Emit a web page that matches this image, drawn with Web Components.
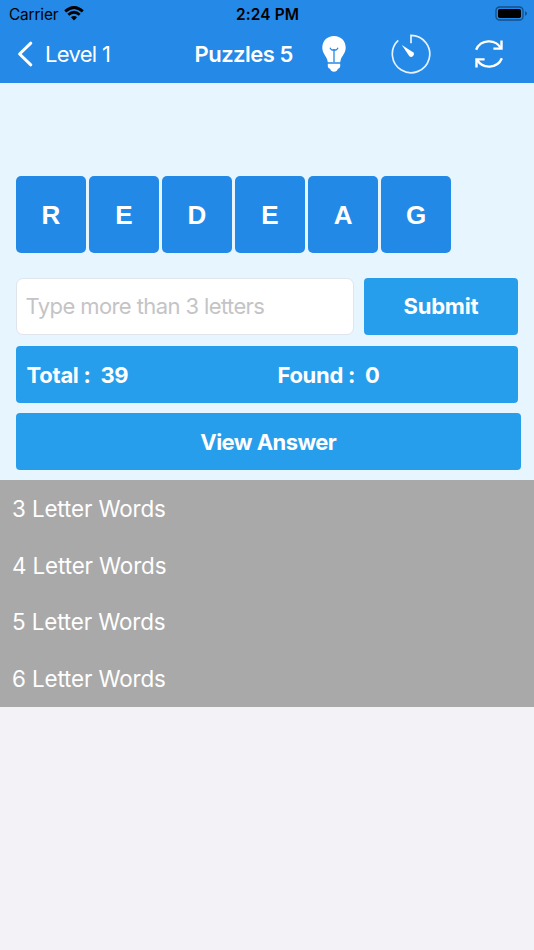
<!DOCTYPE html>
<html lang="en">
<head>
<meta charset="utf-8">
<title>Puzzles 5</title>
<style>
  body {
    margin: 0;
    background: #f2f2f7;
    font-family: Inter, "Liberation Sans", sans-serif;
    font-size: 22px;
  }
</style>
</head>
<body>
<puzzle-page letters="REDEAG" total="39" found="0"></puzzle-page>

<template id="status-bar">
  <style>
    :host {
      display: grid;
      grid-template-columns: 1fr auto 1fr;
      align-items: center;
      height: 28px;
      padding: 0 7px 0 9px;
      color: #000;
      font-size: 15.4px;
    }
    .left { display: flex; align-items: center; gap: 6px; letter-spacing: -0.15px; }
    .left svg { margin-top: -2px; }
    .time { margin-right: 1px; font-weight: 600; letter-spacing: 0.15px; }
    .battery { justify-self: end; margin-top: -1px; }
    svg { display: block; }
  </style>
  <div class="left">
    <span id="carrier"><slot></slot></span>
    <svg width="20" height="15" viewBox="0 0 20 15">
      <g fill="none" stroke="#000" stroke-width="2.8">
        <path d="M1.2 5.4 Q10 -2.5 18.8 5.4"/>
        <path d="M4.3 8.7 Q10 3.7 15.7 8.7"/>
      </g>
      <path d="M6.9 11.2 Q10 8.7 13.1 11.2 L10 14.4 Z"/>
    </svg>
  </div>
  <span class="time"></span>
  <svg class="battery" width="32" height="15" viewBox="0 0 32 15">
    <rect x="1" y="1" width="27" height="13" rx="3.6" fill="none" stroke="#164f87" stroke-width="1.3"/>
    <rect x="3" y="3" width="23" height="9" rx="1.8"/>
    <path d="M30 5.2 Q32 6 32 7.5 Q32 9 30 9.8 Z" fill="#164f87"/>
  </svg>
</template>

<template id="nav-bar">
  <style>
    :host {
      display: flex;
      align-items: center;
      box-sizing: border-box;
      height: 55px;
      padding: 0 0 3px 17px;
      color: #fff;
    }
    svg { display: block; flex: none; }
    .back { width: 96px; margin-left: 11px; letter-spacing: -0.7px; white-space: nowrap; }
    .title { width: 98px; margin-left: 53.5px; font-weight: 600; letter-spacing: -0.5px; white-space: nowrap; }
    .bulb { margin-left: 28.5px; }
    .timer { margin-left: 44px; }
    .refresh { margin-left: 42.5px; }
  </style>
  <svg width="17" height="26" viewBox="0 0 17 26">
    <path d="M13.8 2.2 L2.6 13 L13.8 23.8" fill="none" stroke="#fff" stroke-width="3" stroke-linecap="round" stroke-linejoin="round"/>
  </svg>
  <span class="back"><slot name="back"></slot></span>
  <span class="title"><slot></slot></span>
  <svg class="bulb" width="26" height="38" viewBox="0 0 26 38">
    <path d="M13 1 C6 1 1.3 6 1.3 12.5 C1.3 18 4.8 20.5 6.2 24.5 L6.8 27.3 H19.2 L19.8 24.5 C21.2 20.5 24.7 18 24.7 12.5 C24.7 6 20 1 13 1 Z" fill="#fff"/>
    <path d="M9 12.8 Q10.6 16 13 14.6 Q15.4 16 17 12.8 M13 14.8 V27.3" fill="none" stroke="#2489e7" stroke-width="1.3"/>
    <path d="M6.8 28.8 H19.2 V31.5 Q19 33.4 16.8 34 Q16 36.7 13 36.7 Q10 36.7 9.2 34 Q7 33.4 6.8 31.5 Z" fill="#fff"/>
  </svg>
  <svg class="timer" width="40" height="40" viewBox="0 0 40 40">
    <path d="M20 9.2 V1.3 A18.7 18.7 0 1 1 7.2 6.4" fill="none" stroke="#e6f2fd" stroke-width="1.7"/>
    <path d="M10.8 11 L22.1 18.2 A2.5 2.5 0 0 1 18.2 21.9 Z" fill="#fff"/>
  </svg>
  <svg class="refresh" width="30" height="32" viewBox="0 0 30 32">
    <g fill="none" stroke="#fff" stroke-width="2.4">
      <path d="M2.1 11.7 A14 14 0 0 1 27 10.3"/>
      <path d="M27.5 2.5 V10.6 H19.4"/>
      <path d="M27.9 20.3 A14 14 0 0 1 3 21.7"/>
      <path d="M2.5 29.5 V21.4 H10.6"/>
    </g>
  </svg>
</template>

<template id="letter-tile">
  <style>
    :host {
      display: flex;
      align-items: center;
      justify-content: center;
      box-sizing: border-box;
      width: 70.4px;
      height: 77px;
      padding-top: 1px;
      border-radius: 5px;
      background: #2389e7;
      color: #fff;
      font: bold 26px "Liberation Sans", Arial, sans-serif;
    }
  </style>
  <slot></slot>
</template>

<template id="action-button">
  <style>
    :host { display: block; height: 57px; }
    button {
      width: 100%;
      height: 100%;
      padding: 0;
      border: 0;
      border-radius: 4px;
      background: #279eec;
      color: #fff;
      font: inherit;
      font-weight: 700;
      letter-spacing: var(--spacing, 0);
      cursor: pointer;
    }
  </style>
  <button><slot></slot></button>
</template>

<template id="score-bar">
  <style>
    :host {
      display: grid;
      grid-template-columns: 1fr 1fr;
      align-items: center;
      box-sizing: border-box;
      height: 57px;
      padding: 1px 0 0 11px;
      border-radius: 4px;
      background: #279eec;
      color: #fff;
      font-weight: 700;
      letter-spacing: -0.28px;
      white-space: pre;
    }
    .found { padding-left: 5px; }
  </style>
  <span class="total"></span>
  <span class="found"></span>
</template>

<template id="word-group">
  <style>
    :host {
      display: flex;
      align-items: center;
      box-sizing: border-box;
      height: 56.8px;
      padding-left: 12px;
      color: #fff;
      font-size: 22.4px;
      letter-spacing: -0.12px;
    }
  </style>
  <slot></slot>
</template>

<template id="puzzle-page">
  <style>
    :host { display: block; }
    header { background: #2489e7; }
    main {
      box-sizing: border-box;
      height: 397px;
      padding: 93px 13px 0 15.6px;
      background: #e7f5ff;
    }
    .tiles { display: flex; gap: 2.7px; }
    .entry {
      display: grid;
      grid-template-columns: 338px 154.6px;
      gap: 10px;
      margin-top: 24.6px;
    }
    input {
      box-sizing: border-box;
      width: 100%;
      height: 57px;
      padding: 0 9px;
      border: 1px solid #dfe5ea;
      border-radius: 7px;
      background: #fff;
      font: inherit;
      letter-spacing: -0.6px;
      outline: none;
    }
    input::placeholder { color: #c4c4c6; opacity: 1; }
    .submit { --spacing: -0.2px; }
    score-bar { width: 502.6px; margin-top: 11.6px; }
    .answer { margin-top: 10px; --spacing: -0.55px; }
    section { background: #a9a9a9; }
  </style>
  <header>
    <status-bar time="2:24 PM">Carrier</status-bar>
    <nav-bar><span slot="back">Level 1</span>Puzzles 5</nav-bar>
  </header>
  <main>
    <div class="tiles"></div>
    <div class="entry">
      <input type="text" placeholder="Type more than 3 letters">
      <action-button class="submit">Submit</action-button>
    </div>
    <score-bar></score-bar>
    <action-button class="answer">View Answer</action-button>
  </main>
  <section>
    <word-group>3 Letter Words</word-group>
    <word-group>4 Letter Words</word-group>
    <word-group>5 Letter Words</word-group>
    <word-group>6 Letter Words</word-group>
  </section>
</template>

<script>
class BaseElement extends HTMLElement {
  constructor () {
    super()
    const template = document.getElementById(this.localName);
    this.attachShadow({ mode: 'open' }).appendChild(template.content.cloneNode(true));
  }
}

class StatusBar extends BaseElement {
  connectedCallback () {
    this.shadowRoot.querySelector('.time').textContent = this.getAttribute('time');
  }
}

class NavBar extends BaseElement {}
class LetterTile extends BaseElement {}
class ActionButton extends BaseElement {}
class WordGroup extends BaseElement {}

class ScoreBar extends BaseElement {
  static get observedAttributes () {
    return ['total', 'found'];
  }
  attributeChangedCallback () {
    this.render();
  }
  render () {
    this.shadowRoot.querySelector('.total').textContent = `Total :  ${this.getAttribute('total')}`;
    this.shadowRoot.querySelector('.found').textContent = `Found :  ${this.getAttribute('found')}`;
  }
}

class PuzzlePage extends BaseElement {
  connectedCallback () {
    const tiles = this.shadowRoot.querySelector('.tiles');
    const score = this.shadowRoot.querySelector('score-bar');
    for (const letter of this.getAttribute('letters')) {
      const tile = document.createElement('letter-tile');
      tile.textContent = letter;
      tiles.appendChild(tile);
    }
    score.setAttribute('total', this.getAttribute('total'));
    score.setAttribute('found', this.getAttribute('found'));
  }
}

customElements.define('status-bar', StatusBar)
customElements.define('nav-bar', NavBar)
customElements.define('letter-tile', LetterTile)
customElements.define('action-button', ActionButton)
customElements.define('score-bar', ScoreBar)
customElements.define('word-group', WordGroup)
customElements.define('puzzle-page', PuzzlePage)
</script>
</body>
</html>
